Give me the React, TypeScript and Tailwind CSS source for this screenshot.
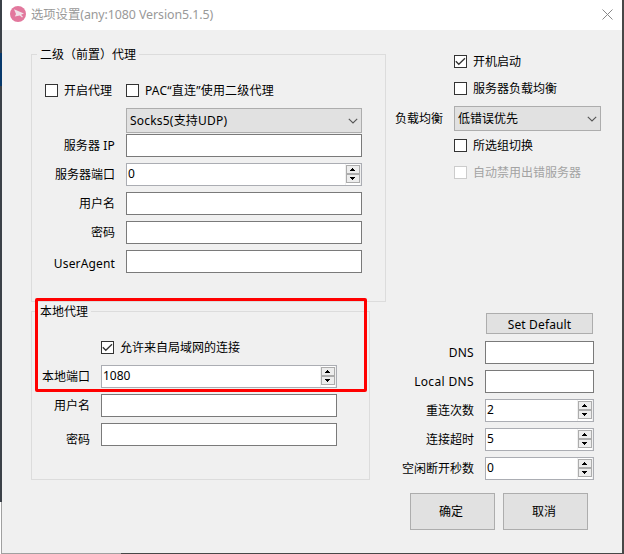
import React from "react";
import clsx from "clsx";

function Check({ label, checked, disabled, className, tracking }: {
  label: string;
  checked?: boolean;
  disabled?: boolean;
  className?: string;
  tracking?: string;
}) {
  return (
    <label className={clsx("flex h-[13px] items-center gap-1.5 whitespace-nowrap", className)}>
      <span
        className={clsx(
          "block size-[13px] shrink-0 border bg-white",
          disabled ? "border-[#cccccc]" : "border-[#333333]"
        )}
      >
        {checked && (
          <svg viewBox="0 0 11 11" className="size-[11px]" fill="none" stroke="#333" strokeWidth="1.3">
            <path d="M.8 5.3 3.8 8.3 10 2.3" />
          </svg>
        )}
      </span>
      <span className={clsx(disabled && "text-[#a3a3a3]", tracking)}>{label}</span>
    </label>
  );
}

function Select({ value, className }: { value: string; className: string }) {
  return (
    <div
      className={clsx(
        "flex h-[25px] items-center justify-between border border-[#adadad] bg-[#e1e1e1] pr-[3px] pl-[3px]",
        className
      )}
    >
      <span>{value}</span>
      <svg viewBox="0 0 10 6" className="h-1.5 w-2.5" fill="none" stroke="#555" strokeWidth="1.1">
        <path d="M.8.8 5 5 9.2.8" />
      </svg>
    </div>
  );
}

function SpinButton({ down }: { down?: boolean }) {
  return (
    <span className="flex h-[9px] w-3.5 items-center justify-center border border-[#acacac] bg-[#ededed] pr-px">
      <svg viewBox="0 0 5 3" className="h-[3px] w-[5px]" fill="#000" shapeRendering="crispEdges">
        <path d={down ? "M0 0h5v1H4v1H3v1H2V2H1V1H0z" : "M0 3h5V2H4V1H3V0H2v1H1v1H0z"} />
      </svg>
    </span>
  );
}

function Field({ label, value, width, labelWidth, labelClass }: {
  label: string;
  value?: string;
  width: string;
  labelWidth: string;
  labelClass?: string;
}) {
  const spin = value !== undefined;
  return (
    <div className="flex h-[23px] items-center gap-[11px]">
      <span className={clsx("shrink-0 text-right whitespace-nowrap", labelWidth, labelClass)}>{label}</span>
      <div
        className={clsx(
          "flex h-[23px] shrink-0 justify-between border bg-white",
          spin ? "border-[#abadb3]" : "border-[#7a7a7a]",
          width
        )}
      >
        {spin && (
          <>
            <span className="pl-px leading-[19px]">{value}</span>
            <span className="flex flex-col border-r border-l border-[#f0f0f0] pt-px">
              <SpinButton />
              <SpinButton down />
            </span>
          </>
        )}
      </div>
    </div>
  );
}

function Group({ title, className, children }: {
  title: string;
  className: string;
  children: React.ReactNode;
}) {
  return (
    <section className={clsx("border border-[#dcdcdc]", className)}>
      <h2 className="-mt-[9px] ml-[5px] h-[17px] w-fit bg-[#f0f0f0] px-[3px] leading-[17px]">{title}</h2>
      {children}
    </section>
  );
}

function Button({ children, className }: { children: React.ReactNode; className: string }) {
  return (
    <button className={clsx("flex items-center justify-center border border-[#adadad] bg-[#e1e1e1]", className)}>
      {children}
    </button>
  );
}

function TitleBar() {
  return (
    <header className="flex h-[30px] items-center bg-white pr-[9px] pl-2 text-[#999999]">
      <svg viewBox="0 0 16 16" className="-mt-0.5 size-4">
        <circle cx="8" cy="8" r="8" fill="#e2789d" />
        <path d="M4 3.2 14 7.6 11 8.8 13 10.8 12 11.4 9.8 9.4 4.8 10.4 6 8z" fill="#f0e2e8" />
      </svg>
      <span className="ml-[5px] text-[12.4px] tracking-[-0.08px]">选项设置(any:1080 Version5.1.5)</span>
      <svg viewBox="0 0 11 11" className="-mt-0.5 ml-auto size-[11px]" stroke="#888" strokeWidth="1">
        <path d="M.5.5 10.5 10.5M10.5.5.5 10.5" />
      </svg>
    </header>
  );
}

export default function App() {
  return (
    <div className="flex h-[554px] w-[624px] overflow-hidden bg-[#474747] font-['Noto_Sans','Noto_Sans_CJK_SC',sans-serif] text-xs leading-4 text-black">
      <div className="flex w-0.5 flex-col bg-[#3b4148]">
        <div className="mt-[53px] h-[33px] bg-[#07396b]" />
        <div className="mt-auto h-[52px] border-r border-[#a0a0a0] bg-white" />
      </div>

      <div className="w-[620px]">
        <TitleBar />
        <main className="flex h-[523px] bg-[#f0f0f0] pl-[29px]">
          <div className="w-[355px] shrink-0 pt-6">
            <Group title="二级（前置）代理" className="h-[248px] w-[355px]">
              <div className="mt-[21px] flex">
                <Check label="开启代理" className="ml-[13px] w-[81px]" />
                <Check label="PAC“直连”使用二级代理" tracking="tracking-[0.2px]" />
              </div>
              <Select value="Socks5(支持UDP)" className="mt-[11px] ml-[94px] w-[236px] tracking-[0.2px]" />
              <div className="mt-px flex flex-col gap-1.5">
                <Field label="服务器 IP" width="w-[236px]" labelWidth="w-[83px]" labelClass="tracking-[0.15px]" />
                <Field label="服务器端口" value="0" width="w-[236px]" labelWidth="w-[83px]" />
                <Field label="用户名" width="w-[236px]" labelWidth="w-[83px]" />
                <Field label="密码" width="w-[236px]" labelWidth="w-[83px]" />
                <Field label="UserAgent" width="w-[236px]" labelWidth="w-[83px]" labelClass="pt-1 tracking-[0.15px]" />
              </div>
            </Group>

            <div className="relative mt-[9px]">
              <Group title="本地代理" className="h-[169px] w-[339px]">
                <Check label="允许来自局域网的连接" checked className="mt-[21px] ml-[69px]" />
                <div className="mt-[11px] flex flex-col gap-1.5">
                  <Field label="本地端口" value="1080" width="w-[236px]" labelWidth="w-[58px]" />
                  <Field label="用户名" width="w-[236px]" labelWidth="w-[58px]" />
                  <Field label="密码" width="w-[236px]" labelWidth="w-[58px]" labelClass="pt-2.5" />
                </div>
              </Group>
              {/* highlight around the LAN settings */}
              <div className="absolute -top-[13px] left-1 h-[94px] w-[332px] rounded-xs border-3 border-[#ff0000]" />
            </div>
          </div>

          <div className="flex-1 pt-[25px]">
            <div className="flex flex-col pl-[68px]">
              <Check label="开机启动" checked />
              <Check label="服务器负载均衡" className="mt-3.5" />
              <div className="mt-[11px] -ml-[59px] flex items-center gap-[11px]">
                <span>负载均衡</span>
                <Select value="低错误优先" className="w-[147px]" />
              </div>
              <Check label="所选组切换" className="mt-2" />
              <Check label="自动禁用出错服务器" disabled className="mt-3.5" />
            </div>

            <div className="mt-[134px] flex flex-col">
              <Button className="ml-[100px] h-[21px] w-[107px] pt-0.5 tracking-[0.15px]">Set Default</Button>
              <div className="mt-[7px] flex flex-col gap-1.5">
                <Field label="DNS" width="w-[109px]" labelWidth="w-[88px]" labelClass="tracking-[0.3px]" />
                <Field label="Local DNS" width="w-[109px]" labelWidth="w-[88px]" labelClass="tracking-[0.35px]" />
                <Field label="重连次数" value="2" width="w-[109px]" labelWidth="w-[88px]" />
                <Field label="连接超时" value="5" width="w-[109px]" labelWidth="w-[88px]" />
                <Field label="空闲断开秒数" value="0" width="w-[109px]" labelWidth="w-[88px]" />
              </div>
            </div>

            <div className="mt-[13px] ml-6 flex gap-2">
              <Button className="h-[37px] w-[85px] pr-[3px]">确定</Button>
              <Button className="h-[37px] w-[85px] pr-[3px]">取消</Button>
            </div>
          </div>
        </main>
        <div className="h-px w-[119px] bg-[#a0a0a0]" />
      </div>
    </div>
  );
}
